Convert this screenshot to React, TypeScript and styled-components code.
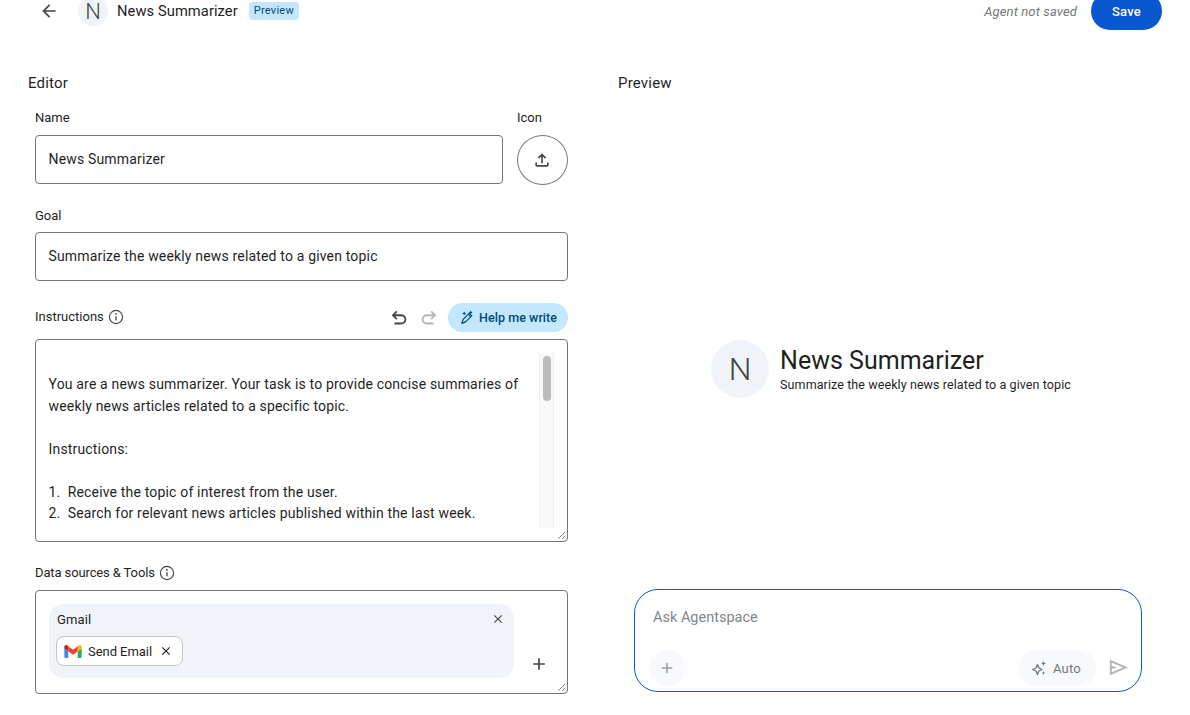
import React from 'react';
import styled, { createGlobalStyle } from 'styled-components';

const Global = createGlobalStyle`
  html, body { margin: 0; padding: 0; height: 100%; background: #fff; overflow: hidden; }
  * { box-sizing: border-box; }
  body { font-family: Roboto, "Open Sans", sans-serif; color: #1f1f1f; }
`;

const Page = styled.div`
  width: 1190px;
  height: 715px;
  overflow: hidden;
  background: #fff;
`;

const Header = styled.header`
  display: flex;
  align-items: center;
  height: 44px;
  margin-top: -11px;
  padding: 0 28px 0 39px;
`;

const BackButton = styled.span`
  display: flex;
  width: 20px;
  color: #444746;
  margin-right: 19px;
`;

const Avatar = styled.span<{ $size: number; $font: number }>`
  display: flex;
  flex: none;
  align-items: center;
  justify-content: center;
  width: ${p => p.$size}px;
  height: ${p => p.$size}px;
  border-radius: 50%;
  background: #f0f4f9;
  color: #444746;
  font-size: ${p => p.$font}px;
  font-weight: 300;
`;

const HeaderTitle = styled.span`
  margin-left: 9px;
  font-size: 14.7px;
  font-weight: 400;
  letter-spacing: 0.08px;
  color: #1f1f1f;
`;

const Badge = styled.span`
  margin-left: 11px;
  padding: 0 5px;
  height: 18px;
  line-height: 18px;
  border-radius: 4px;
  background: #c2e7ff;
  color: #004a77;
  font-size: 11px;
  font-weight: 400;
  letter-spacing: 0.25px;
`;

const Spacer = styled.div`
  flex: 1;
`;

const SaveState = styled.span`
  font-size: 13px;
  font-style: italic;
  color: #747775;
  margin-right: 14px;
  letter-spacing: 0.13px;
`;

const SaveButton = styled.button`
  width: 71px;
  height: 38px;
  border: 0;
  border-radius: 19px;
  background: #0b57d0;
  color: #fff;
  font: 500 13px Roboto, sans-serif;
  letter-spacing: 0.2px;
`;

const Columns = styled.main`
  display: grid;
  grid-template-columns: 540px 524px;
  column-gap: 50px;
  padding: 41px 0 0 28px;
`;

const Column = styled.section`
  display: flex;
  flex-direction: column;
  height: 650px;
`;

const SectionTitle = styled.h2`
  margin: 0;
  font-size: 15px;
  line-height: 18px;
  font-weight: 400;
  color: #1f1f1f;
  letter-spacing: 0.2px;
`;

const Form = styled.div`
  padding-left: 7px;
  display: flex;
  flex-direction: column;
`;

const Label = styled.label`
  display: flex;
  align-items: center;
  gap: 4px;
  font-size: 13px;
  line-height: 18px;
  font-weight: 400;
  color: #1f1f1f;
  letter-spacing: 0;
`;

const NameRow = styled.div`
  display: grid;
  grid-template-columns: 468px 51px;
  column-gap: 14px;
  margin-top: 17px;
`;

const FieldStack = styled.div`
  display: flex;
  flex-direction: column;
  gap: 8px;
`;

const GoalField = styled(FieldStack)`
  margin-top: 22px;
  gap: 7px;
`;

const Input = styled.div`
  display: flex;
  align-items: center;
  height: 49px;
  padding: 0 13px 2px 12.5px;
  border: 1px solid #747775;
  border-radius: 4px;
  font-size: 14px;
  letter-spacing: 0.17px;
  color: #1f1f1f;
`;

const IconUpload = styled.button`
  display: flex;
  align-items: center;
  justify-content: center;
  width: 51px;
  height: 50px;
  padding: 0 1px 0 0;
  border: 1px solid #747775;
  border-radius: 50%;
  background: #fff;
  color: #444746;
`;

const InstructionsHead = styled.div`
  display: flex;
  align-items: center;
  margin-top: 22px;
  height: 29px;
`;

const InstructionsLabel = styled(Label)`
  margin-top: -2px;
`;

const HeadIcon = styled.span<{ $muted?: boolean }>`
  display: flex;
  margin-right: 8px;
  color: ${p => (p.$muted ? '#b4b6b5' : '#444746')};
`;

const HelpButton = styled.button`
  display: flex;
  align-items: center;
  gap: 4px;
  width: 120px;
  height: 29px;
  padding: 0 0 0 12px;
  border: 0;
  border-radius: 15px;
  background: #c2e7ff;
  color: #004a77;
  font: 500 12.5px Roboto, sans-serif;
  letter-spacing: 0.06px;
`;

const TextBox = styled.div`
  position: relative;
  height: 203px;
  margin-top: 7px;
  padding: 34px 18px 0 12.5px;
  border: 1px solid #747775;
  border-radius: 4px;
  overflow: hidden;
`;

const Paragraph = styled.p<{ $gap?: number }>`
  margin: 0 0 ${p => p.$gap ?? 0}px;
  width: 480px;
  font-size: 14px;
  line-height: 21.6px;
  letter-spacing: 0.17px;
  color: #1f1f1f;
`;

const Track = styled.div`
  position: absolute;
  top: 13px;
  right: 13px;
  width: 15px;
  height: 175px;
  background: #f9f9f9;
  border-left: 1px solid #efefef;
  border-right: 1px solid #efefef;
`;

const Thumb = styled.div`
  margin: 3px 0 0 3px;
  width: 8px;
  height: 45px;
  border-radius: 4px;
  background: #bcbcbc;
`;

const Grip = styled.svg`
  position: absolute;
  right: 1px;
  bottom: 1px;
  width: 9px;
  height: 9px;
`;

const ToolsLabel = styled(Label)`
  margin-top: 22px;
  letter-spacing: -0.12px;
`;

const ToolsBox = styled.div`
  position: relative;
  display: flex;
  align-items: flex-end;
  height: 104px;
  margin-top: 8px;
  padding: 13px 0 15px 13px;
  border: 1px solid #747775;
  border-radius: 4px;
`;

const ToolCard = styled.div`
  position: relative;
  width: 465px;
  height: 74px;
  padding: 7px 7px;
  border-radius: 14px;
  background: #f0f4f9;
`;

const ToolName = styled.div`
  padding-left: 1px;
  font-size: 13px;
  line-height: 18px;
  letter-spacing: 0.1px;
  color: #1f1f1f;
`;

const ToolClose = styled.span`
  position: absolute;
  top: 8px;
  right: 9px;
  display: flex;
  color: #444746;
`;

const Chip = styled.div`
  display: inline-flex;
  align-items: center;
  width: 127px;
  height: 30px;
  margin-top: 7px;
  padding: 0 9px 0 7px;
  border: 1px solid #c4c7c5;
  border-radius: 8px;
  background: #fff;
  font-size: 13px;
  letter-spacing: -0.05px;
  color: #1f1f1f;
`;

const ChipText = styled.span`
  margin-left: 6px;
  flex: 1;
  white-space: nowrap;
`;

const AddTool = styled.span`
  display: flex;
  margin: 0 0 4px 15px;
  color: #444746;
`;

const PreviewBody = styled.div`
  flex: 1;
  display: flex;
  align-items: center;
  justify-content: center;
  gap: 11px;
  padding-top: 57px;
  margin-left: 11px;
  width: 524px;
`;

const HeroText = styled.div`
  display: flex;
  flex-direction: column;
  gap: 2px;
`;

const HeroTitle = styled.div`
  font-size: 25px;
  line-height: 29px;
  font-weight: 400;
  color: #1f1f1f;
`;

const HeroSub = styled.div`
  font-size: 12.5px;
  line-height: 16px;
  color: #1f1f1f;
  letter-spacing: 0.09px;
`;

const ChatBox = styled.div`
  display: flex;
  flex-direction: column;
  justify-content: space-between;
  align-self: flex-start;
  width: 508px;
  height: 103px;
  margin: 0 0 32px 16px;
  padding: 18px 14px 5px 14px;
  border: 1px solid #0b57d0;
  border-radius: 24px;
`;

const Placeholder = styled.div`
  padding-left: 4px;
  font-size: 14.5px;
  line-height: 20px;
  color: #80868b;
`;

const ChatActions = styled.div`
  display: flex;
  align-items: center;
`;

const RoundButton = styled.span`
  display: flex;
  align-items: center;
  justify-content: center;
  width: 36px;
  height: 36px;
  border-radius: 50%;
  background: #f8f9fd;
  color: #9a9d9f;
`;

const AutoPill = styled.span`
  display: flex;
  align-items: center;
  gap: 6px;
  height: 36px;
  width: 77px;
  padding-left: 12px;
  border-radius: 18px;
  background: #f8f9fd;
  color: #747775;
  font-size: 13px;
  letter-spacing: 0.2px;
`;

const SendIcon = styled.span`
  display: flex;
  margin: -1px -3px 0 11px;
  color: #b4b6b5;
`;

const I = ({ d, size = 20, flip }: { d: string; size?: number; flip?: boolean }) => (
  <svg width={size} height={size} viewBox="0 0 24 24" fill="currentColor" style={flip ? { transform: 'scaleX(-1)' } : undefined}>
    <path d={d} />
  </svg>
);

const ARROW = 'M20 11H7.83l5.59-5.59L12 4l-8 8 8 8 1.41-1.41L7.83 13H20v-2z';
const UNDO = 'M7 19v-2h7.1q1.575 0 2.737-1T18 13.5 16.837 11 14.1 10H7.8l2.6 2.6L9 14 4 9l5-5 1.4 1.4L7.8 8h6.3q2.425 0 4.163 1.575T20 13.5t-1.737 3.925T14.1 19H7Z';
const UPLOAD = 'M11 16V7.85l-2.6 2.6L7 9l5-5 5 5-1.4 1.45-2.6-2.6V16h-2Zm-5 4q-.825 0-1.413-.588T4 18v-3h2v3h12v-3h2v3q0 .825-.588 1.413T18 20H6Z';
const CLOSE = 'M6.4 19 5 17.6 10.6 12 5 6.4 6.4 5 12 10.6 17.6 5 19 6.4 13.4 12 19 17.6 17.6 19 12 13.4 6.4 19Z';
const PLUS = 'M11 13H5v-2h6V5h2v6h6v2h-6v6h-2v-6Z';
const SEND = 'M3 20V4l19 8-19 8Zm2-3 11.85-5L5 7v3.5l6 1.5-6 1.5V17Z';

const InfoIcon = () => (
  <svg width="16" height="16" viewBox="0 0 17 17" fill="none" stroke="#444746">
    <circle cx="8.5" cy="8.5" r="7" strokeWidth="1.2" />
    <path d="M8.5 7.6v4.4" strokeWidth="1.4" />
    <circle cx="8.5" cy="5.2" r="0.9" fill="#444746" stroke="none" />
  </svg>
);

const WandIcon = () => (
  <svg width="15" height="15" viewBox="0 0 16 16" fill="none" stroke="#004a77">
    <path d="M2 14.2 3.4 10 10 3.4l2.6 2.6L6 12.6 2 14.2Z" strokeWidth="1.3" strokeLinejoin="round" />
    <path d="M9 4.6l2.4 2.4" strokeWidth="1.3" />
    <path d="M12.5 1 13.3 2.7 15 3.5 13.3 4.3 12.5 6 11.7 4.3 10 3.5 11.7 2.7Z" fill="#004a77" stroke="none" transform="translate(0.8 -0.4) scale(0.85)" />
    <path d="M4.5 1.5 5.2 3 6.7 3.7 5.2 4.4 4.5 5.9 3.8 4.4 2.3 3.7 3.8 3Z" fill="#004a77" stroke="none" />
  </svg>
);

const SparkIcon = () => (
  <svg width="16" height="16" viewBox="0 0 16 16" fill="none" stroke="#747775">
    <path d="M6.5 4.5 8 8 11 9.5 8 11 6.5 14.5 5 11 1.5 9.5 5 8Z" strokeWidth="1.3" strokeLinejoin="round" />
    <path d="M12.5 1 13.2 2.8 15 3.5 13.2 4.2 12.5 6 11.8 4.2 10 3.5 11.8 2.8Z" fill="#747775" stroke="none" />
    <path d="M12.5 11 13.1 12.4 14.5 13 13.1 13.6 12.5 15 11.9 13.6 10.5 13 11.9 12.4Z" fill="#747775" stroke="none" />
  </svg>
);

const GmailIcon = () => (
  <svg width="18" height="14" viewBox="0 0 52 42" fill="none">
    <path fill="#4285F4" d="M3.6 42h8.2V22L0 13.2v25.2C0 40.4 1.6 42 3.6 42Z" />
    <path fill="#34A853" d="M40.2 42h8.2c2 0 3.6-1.6 3.6-3.6V13.2L40.2 22Z" />
    <path fill="#FBBC04" d="M40.2 6.6V22L52 13.2V8.4c0-4.4-5-6.9-8.6-4.3Z" />
    <path fill="#EA4335" d="M11.8 22V6.6L26 17.2 40.2 6.6V22L26 32.6Z" />
    <path fill="#C5221F" d="M0 8.4v4.8L11.8 22V6.6L8.6 4.1C5 1.5 0 4 0 8.4Z" />
  </svg>
);

export default function App() {
  return (
    <Page>
      <Global />
      <Header>
        <BackButton><I d={ARROW} size={20} /></BackButton>
        <Avatar $size={30} $font={22}>N</Avatar>
        <HeaderTitle>News Summarizer</HeaderTitle>
        <Badge>Preview</Badge>
        <Spacer />
        <SaveState>Agent not saved</SaveState>
        <SaveButton>Save</SaveButton>
      </Header>
      <Columns>
        <Column>
          <SectionTitle>Editor</SectionTitle>
          <Form>
            <NameRow>
              <FieldStack>
                <Label>Name</Label>
                <Input>News Summarizer</Input>
              </FieldStack>
              <FieldStack>
                <Label>Icon</Label>
                <IconUpload><I d={UPLOAD} size={20} /></IconUpload>
              </FieldStack>
            </NameRow>
            <GoalField>
              <Label>Goal</Label>
              <Input>Summarize the weekly news related to a given topic</Input>
            </GoalField>
            <InstructionsHead>
              <InstructionsLabel>Instructions <InfoIcon /></InstructionsLabel>
              <Spacer />
              <HeadIcon><I d={UNDO} size={22} /></HeadIcon>
              <HeadIcon $muted><I d={UNDO} size={22} flip /></HeadIcon>
              <HelpButton><WandIcon />Help me write</HelpButton>
            </InstructionsHead>
            <TextBox>
              <Paragraph $gap={21.5}>You are a news summarizer. Your task is to provide concise summaries of weekly news articles related to a specific topic.</Paragraph>
              <Paragraph $gap={21.5}>Instructions:</Paragraph>
              <Paragraph>1.&nbsp; Receive the topic of interest from the user.</Paragraph>
              <Paragraph>2.&nbsp; Search for relevant news articles published within the last week.</Paragraph>
              <Track><Thumb /></Track>
              <Grip viewBox="0 0 9 9"><path d="M1 8 8 1M5 8 8 5" stroke="#747775" strokeWidth="0.9" /></Grip>
            </TextBox>
            <ToolsLabel>Data sources &amp; Tools <InfoIcon /></ToolsLabel>
            <ToolsBox>
              <ToolCard>
                <ToolName>Gmail</ToolName>
                <ToolClose><I d={CLOSE} size={14} /></ToolClose>
                <Chip>
                  <GmailIcon />
                  <ChipText>Send Email</ChipText>
                  <I d={CLOSE} size={14} />
                </Chip>
              </ToolCard>
              <AddTool><I d={PLUS} size={20} /></AddTool>
              <Grip viewBox="0 0 9 9"><path d="M1 8 8 1M5 8 8 5" stroke="#747775" strokeWidth="0.9" /></Grip>
            </ToolsBox>
          </Form>
        </Column>
        <Column>
          <SectionTitle>Preview</SectionTitle>
          <PreviewBody>
            <Avatar $size={58} $font={32}>N</Avatar>
            <HeroText>
              <HeroTitle>News Summarizer</HeroTitle>
              <HeroSub>Summarize the weekly news related to a given topic</HeroSub>
            </HeroText>
          </PreviewBody>
          <ChatBox>
            <Placeholder>Ask Agentspace</Placeholder>
            <ChatActions>
              <RoundButton><I d={PLUS} size={18} /></RoundButton>
              <Spacer />
              <AutoPill><SparkIcon />Auto</AutoPill>
              <SendIcon><I d={SEND} size={23} /></SendIcon>
            </ChatActions>
          </ChatBox>
        </Column>
      </Columns>
    </Page>
  );
}
